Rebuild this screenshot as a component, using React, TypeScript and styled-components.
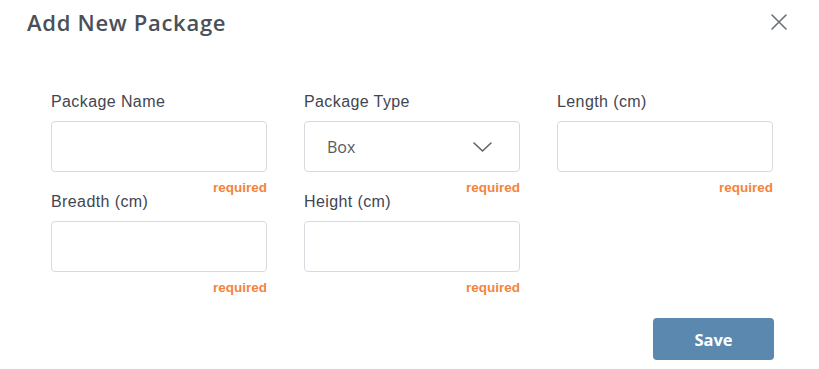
import React from "react";
import styled, { createGlobalStyle } from "styled-components";

const GlobalStyle = createGlobalStyle`
  html, body { margin: 0; padding: 0; background: #ffffff; }
  body { font-family: "Liberation Sans", Arial, sans-serif; }
  * { box-sizing: border-box; }
`;

const Modal = styled.div`
  width: 819px;
  height: 369px;
  background: #ffffff;
  display: flex;
  flex-direction: column;
`;

const Header = styled.div`
  display: flex;
  align-items: center;
  justify-content: space-between;
  height: 44px;
  padding: 0 32px 0 27px;
`;

const Title = styled.h2`
  margin: 0;
  font-family: "Open Sans", sans-serif;
  font-weight: 600;
  font-size: 22px;
  letter-spacing: 0.7px;
  color: #4a5059;
`;

const CloseButton = styled.button`
  border: none;
  background: transparent;
  padding: 0;
  width: 16px;
  height: 16px;
  display: flex;
  align-items: center;
  justify-content: center;
  color: #6b7178;
  cursor: pointer;
`;

const Body = styled.div`
  padding: 48px 45px 0 51px;
  display: flex;
  flex-direction: column;
`;

const Grid = styled.div`
  display: grid;
  grid-template-columns: repeat(3, 216px);
  column-gap: 37px;
`;

const Field = styled.div`
  display: flex;
  flex-direction: column;
`;

const Label = styled.label`
  font-size: 16px;
  line-height: 19px;
  letter-spacing: 0.4px;
  color: #3f4652;
  margin-bottom: 10px;
`;

const Input = styled.input`
  height: 51px;
  width: 100%;
  border: 1px solid #d6dadf;
  border-radius: 4px;
  background: #fff;
  padding: 0 22px;
  font-size: 16px;
  outline: none;
`;

const SelectBox = styled.div`
  height: 51px;
  border: 1px solid #d6dadf;
  border-radius: 4px;
  display: flex;
  align-items: center;
  justify-content: space-between;
  padding: 0 27px 0 22px;
  font-family: "Open Sans", sans-serif;
  font-size: 16px;
  color: #555b62;
`;

const Required = styled.span`
  margin-top: 11px;
  text-align: right;
  font-size: 13.5px;
  line-height: 9px;
  font-weight: 700;
  color: #f4843c;
`;

const Footer = styled.div`
  display: flex;
  justify-content: flex-end;
  margin-top: 26px;
`;

const SaveButton = styled.button`
  width: 121px;
  height: 42px;
  border: none;
  border-radius: 4px;
  background: #5b88ae;
  color: #ffffff;
  font-family: "Open Sans", sans-serif;
  font-weight: 700;
  font-size: 16.5px;
  cursor: pointer;
`;

type FieldDef = { label: string; kind?: "select"; value?: string };

const fields: FieldDef[] = [
  { label: "Package Name" },
  { label: "Package Type", kind: "select", value: "Box" },
  { label: "Length (cm)" },
  { label: "Breadth (cm)" },
  { label: "Height (cm)" },
];

export default function App() {
  return (
    <>
      <GlobalStyle />
      <Modal>
        <Header>
          <Title>Add New Package</Title>
          <CloseButton aria-label="Close">
            <svg width="16" height="16" viewBox="0 0 16 16">
              <path d="M1 1 L15 15 M15 1 L1 15" stroke="currentColor" strokeWidth="1.6" strokeLinecap="round" />
            </svg>
          </CloseButton>
        </Header>
        <Body>
          <Grid>
            {fields.map((f, i) => (
              <Field key={i}>
                <Label>{f.label}</Label>
                {f.kind === "select" ? (
                  <SelectBox>
                    <span>{f.value}</span>
                    <svg width="19" height="10" viewBox="0 0 19 10">
                      <path d="M1 1 L9.5 9 L18 1" fill="none" stroke="#5d636a" strokeWidth="1.6" strokeLinecap="round" strokeLinejoin="round" />
                    </svg>
                  </SelectBox>
                ) : (
                  <Input />
                )}
                <Required>required</Required>
              </Field>
            ))}
          </Grid>
          <Footer>
            <SaveButton>Save</SaveButton>
          </Footer>
        </Body>
      </Modal>
    </>
  );
}
